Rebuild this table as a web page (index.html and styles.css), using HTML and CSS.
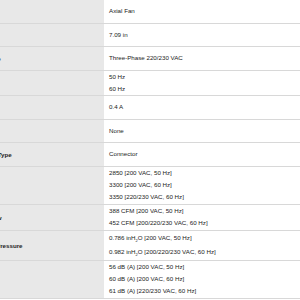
FILE: index.html
```html
<!DOCTYPE html>
<html>
<head>
<meta charset="utf-8">
<link rel="stylesheet" href="styles.css">
</head>
<body>
<div class="scroller">
  <div class="specs">
    <div class="label">Fan Type</div>
    <div class="value"><div class="line">Axial Fan</div></div>

    <div class="label">Frame Size</div>
    <div class="value"><div class="line">7.09 in</div></div>

    <div class="label">Input Voltage</div>
    <div class="value"><div class="line">Three-Phase 220/230 VAC</div></div>

    <div class="label">Frequency</div>
    <div class="value multi"><div class="line">50 Hz</div><div class="line">60 Hz</div></div>

    <div class="label">Current</div>
    <div class="value"><div class="line">0.4 A</div></div>

    <div class="label">Protection</div>
    <div class="value"><div class="line">None</div></div>

    <div class="label">Connection Type</div>
    <div class="value"><div class="line">Connector</div></div>

    <div class="label">Speed</div>
    <div class="value multi"><div class="line">2850 [200 VAC, 50 Hz]</div><div class="line">3300 [200 VAC, 60 Hz]</div><div class="line">3350 [220/230 VAC, 60 Hz]</div></div>

    <div class="label">Max. Air Flow</div>
    <div class="value multi"><div class="line">388 CFM [200 VAC, 50 Hz]</div><div class="line">452 CFM [200/220/230 VAC, 60 Hz]</div></div>

    <div class="label">Max. Static Pressure</div>
    <div class="value multi"><div class="line tall">0.786 inH<sub>2</sub>O [200 VAC, 50 Hz]</div><div class="line tall">0.982 inH<sub>2</sub>O [200/220/230 VAC, 60 Hz]</div></div>

    <div class="label">Noise Level</div>
    <div class="value multi"><div class="line">56 dB (A) [200 VAC, 50 Hz]</div><div class="line">60 dB (A) [200 VAC, 60 Hz]</div><div class="line">61 dB (A) [220/230 VAC, 60 Hz]</div></div>
  </div>
</div>
</body>
</html>
```
FILE: styles.css
```css
html, body {
  margin: 0;
  padding: 0;
  background: #ffffff;
}
body {
  font-family: "Liberation Sans", Arial, sans-serif;
  font-size: 6.2px;
  color: #222222;
}
.scroller {
  width: 300px;
  height: 300px;
  overflow: hidden;
}
.specs {
  display: grid;
  grid-template-columns: 146.5px 236px;
  margin-left: -42.5px;
}
.label {
  background: #e8e8e8;
  font-weight: bold;
  padding-left: 4.5px;
  display: flex;
  align-items: center;
  border-bottom: 1px solid #d8d8d8;
  min-height: 22.5px;
}
.value {
  padding: 0 5px;
  display: flex;
  flex-direction: column;
  justify-content: center;
  border-bottom: 1px solid #d8d8d8;
  min-height: 22.5px;
}
.value.multi {
  justify-content: flex-start;
  padding-top: 0;
  padding-bottom: 0.4px;
}
.line {
  line-height: 12.2px;
}
.line.tall {
  line-height: 14.5px;
}
.line sub {
  font-size: 4px;
  line-height: 0;
  vertical-align: -1.5px;
}
```
